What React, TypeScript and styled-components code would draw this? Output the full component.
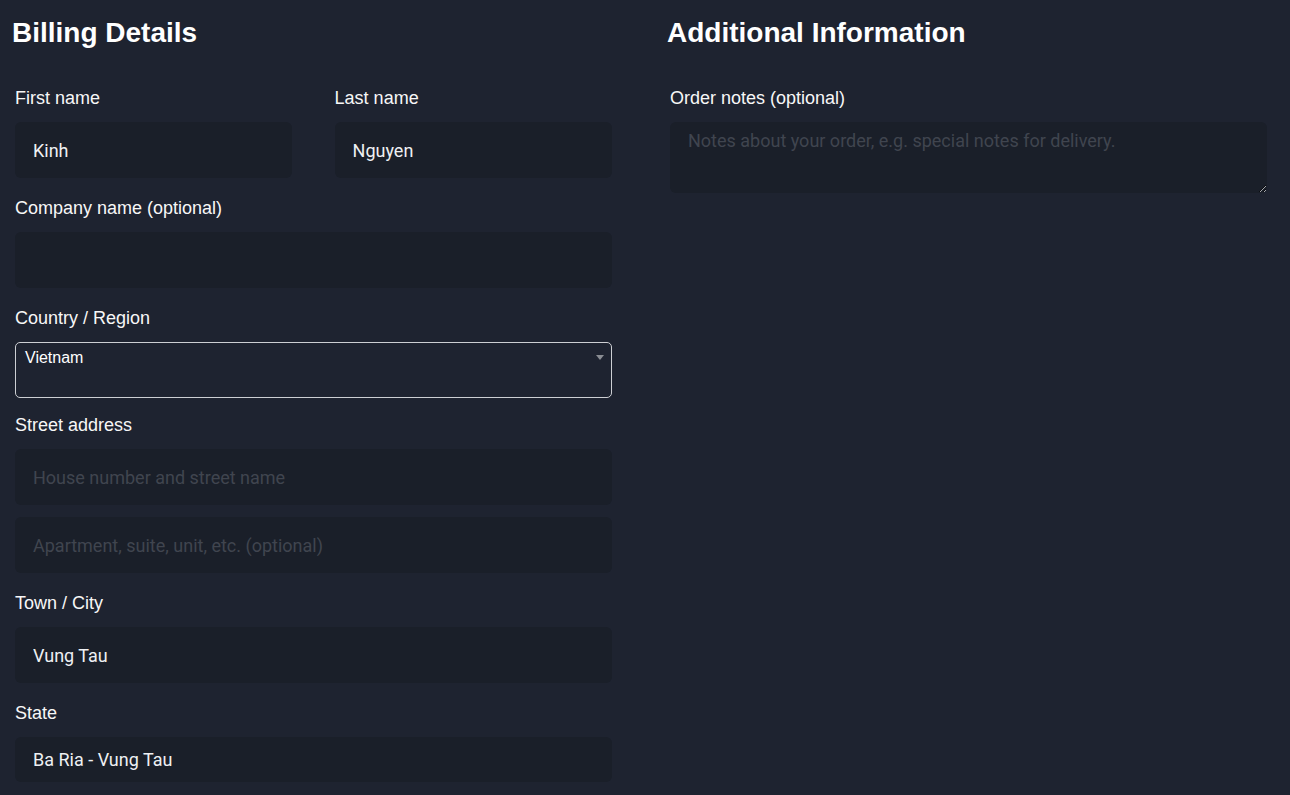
import styled, { createGlobalStyle } from "styled-components";

const GlobalStyle = createGlobalStyle`
    html, body {
        margin: 0;
        padding: 0;
        background: #1e2330;
    }
    * {
        box-sizing: border-box;
    }
`;

export default function App() {
    return (
        <>
            <GlobalStyle />
            <Page>
                <Column>
                    <Heading>Billing Details</Heading>
                    <NameRow>
                        <Field $half>
                            <Label>First name</Label>
                            <Input defaultValue="Kinh" />
                        </Field>
                        <Field $half>
                            <Label>Last name</Label>
                            <Input defaultValue="Nguyen" />
                        </Field>
                    </NameRow>
                    <Field>
                        <Label>Company name (optional)</Label>
                        <Input />
                    </Field>
                    <Field $tight>
                        <Label>Country / Region</Label>
                        <Select role="combobox">
                            <span>Vietnam</span>
                            <Arrow />
                        </Select>
                    </Field>
                    <Field>
                        <Label>Street address</Label>
                        <Input placeholder="House number and street name" />
                        <Input $second placeholder="Apartment, suite, unit, etc. (optional)" />
                    </Field>
                    <Field>
                        <Label>Town / City</Label>
                        <Input defaultValue="Vung Tau" />
                    </Field>
                    <Field>
                        <Label>State</Label>
                        <Input $short defaultValue="Ba Ria - Vung Tau" />
                    </Field>
                </Column>
                <Column>
                    <Heading>Additional Information</Heading>
                    <Field>
                        <Label>Order notes (optional)</Label>
                        <Notes placeholder="Notes about your order, e.g. special notes for delivery." />
                    </Field>
                </Column>
            </Page>
        </>
    );
}

const Page = styled.div`
    display: grid;
    grid-template-columns: 603px 603px;
    column-gap: 52px;
    align-items: start;
    padding: 17px 0 0 12px;
    font-family: "Liberation Sans", Arial, sans-serif;
`;

const Column = styled.div`
    display: flex;
    flex-direction: column;
`;

const Heading = styled.h3`
    margin: 0 0 34px;
    font-size: 28px;
    line-height: 32px;
    font-weight: 700;
    color: #ffffff;
`;

const NameRow = styled.div`
    display: flex;
    justify-content: space-between;
`;

const Field = styled.div<{ $half?: boolean; $tight?: boolean }>`
    display: flex;
    flex-direction: column;
    width: ${(p) => (p.$half ? "47%" : "100%")};
    padding: 3px;
    margin-bottom: ${(p) => (p.$tight ? "9px" : "12px")};
`;

const Label = styled.label`
    display: block;
    margin-bottom: 12px;
    font-size: 18px;
    line-height: 24px;
    color: #f7f7f7;
`;

const Input = styled.input<{ $second?: boolean; $short?: boolean }>`
    width: 100%;
    height: ${(p) => (p.$short ? "45px" : "56px")};
    margin-top: ${(p) => (p.$second ? "12px" : "0")};
    padding: 0 18px;
    border: none;
    border-radius: 6px;
    outline: none;
    background: #1a1f29;
    color: #eef0f3;
    font-family: Roboto, "Liberation Sans", sans-serif;
    font-size: 18px;

    &::placeholder {
        color: #40454f;
    }
`;

const Select = styled.div`
    display: flex;
    justify-content: space-between;
    align-items: flex-start;
    height: 56px;
    padding: 5px 7px 0 9px;
    border: 1px solid #cdcfd3;
    border-radius: 5px;
    color: #ffffff;
    font-size: 16px;
    line-height: 20px;
`;

const Arrow = styled.span`
    width: 0;
    height: 0;
    margin-top: 7px;
    border-left: 4px solid transparent;
    border-right: 4px solid transparent;
    border-top: 5px solid #8a8d93;
`;

const Notes = styled.textarea`
    width: 100%;
    height: 71px;
    padding: 8px 18px;
    border: none;
    border-radius: 6px;
    outline: none;
    resize: vertical;
    color-scheme: dark;
    background: #1a1f29;
    color: #eef0f3;
    font-family: Roboto, "Liberation Sans", sans-serif;
    font-size: 18px;
    line-height: 21px;

    &::placeholder {
        color: #40454f;
    }
`;
